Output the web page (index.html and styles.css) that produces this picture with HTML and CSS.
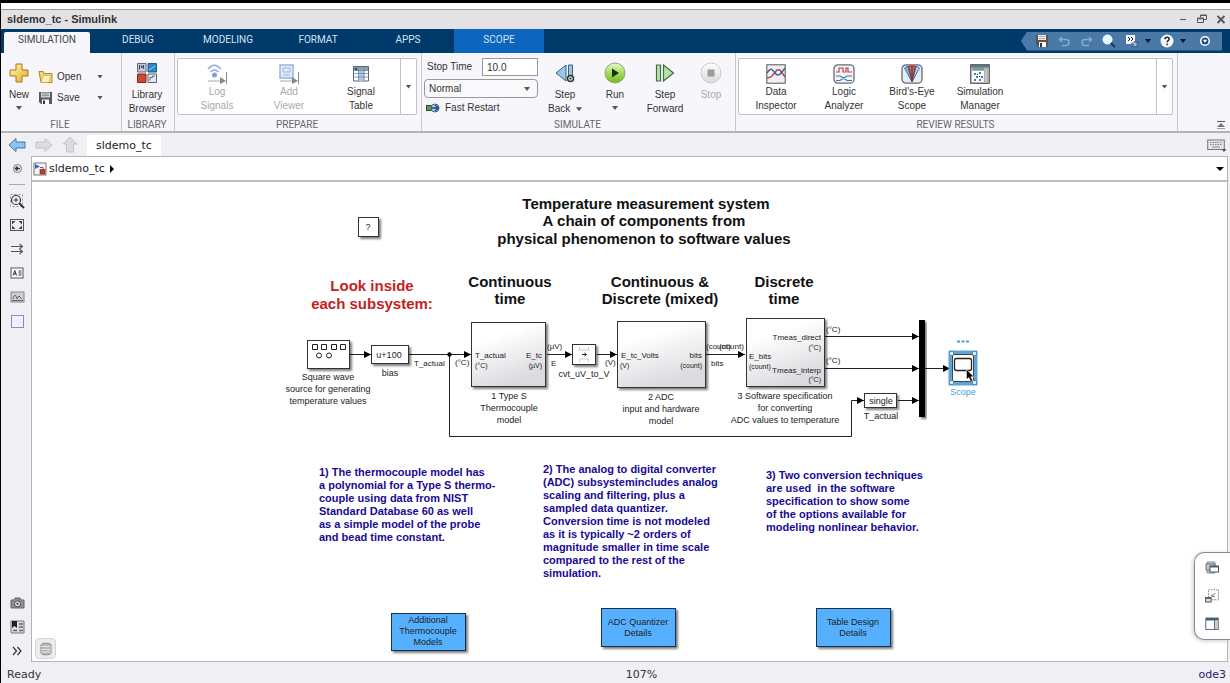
FILE: index.html
```html
<!DOCTYPE html>
<html lang="en">
<head>
<meta charset="utf-8">
<title>sldemo_tc - Simulink</title>
<link rel="stylesheet" href="styles.css">
</head>
<body>
<div class="app">
  <header class="titlebar">
    <h1 class="title">sldemo_tc - Simulink</h1>
    <div class="window-buttons">
      <button class="plain" aria-label="Minimize"><svg width="10" height="10" viewBox="0 0 10 10"><path d="M2 5.5h6" stroke="#666" stroke-width="1.2"/></svg></button>
      <button class="plain" aria-label="Restore"><svg width="10" height="10" viewBox="0 0 10 10" fill="none" stroke="#555"><path d="M3.5 3.500V1h6v4.500H7M3.500 1.500h6M.5 4h6v4.500h-6zM.5 4.800h6"/></svg></button>
      <button class="plain" aria-label="Close"><svg width="10" height="10" viewBox="0 0 10 10"><path d="M1.500 2l7 7M8.500 2l-7 7" stroke="#555" stroke-width="1.800"/></svg></button>
    </div>
  </header>

  <nav class="tabs">
    <button class="tab tab-active">SIMULATION</button>
    <button class="tab">DEBUG</button>
    <button class="tab">MODELING</button>
    <button class="tab">FORMAT</button>
    <button class="tab">APPS</button>
    <button class="tab tab-context">SCOPE</button>
    <div class="quick">
      <button class="plain" aria-label="Save"><svg width="14" height="14" viewBox="0 0 14 14"><path d="M1 1h12v12H3l-2-2z" fill="#555"/><path d="M3 1h8v5H3z" fill="#eee"/><path d="M4 2.500h6M4 4.500h6" stroke="#c98a66" stroke-width=".8"/><path d="M4 8h7v5H4z" fill="#fff"/><path d="M5 9h2v4H5z" fill="#333"/></svg></button>
      <button class="plain" aria-label="Undo"><svg width="13" height="13" viewBox="0 0 13 13" fill="none" stroke="#7faed6" stroke-width="1.500"><path d="M4 2L1.500 4.500 4 7M1.500 4.500H8c4 0 4 6 0 6H4"/></svg></button>
      <button class="plain" aria-label="Redo"><svg width="13" height="13" viewBox="0 0 13 13" fill="none" stroke="#7faed6" stroke-width="1.500"><path d="M9 2l2.500 2.500L9 7M11.500 4.500H5c-4 0-4 6 0 6h4"/></svg></button>
      <button class="plain" aria-label="Search"><svg width="14" height="14" viewBox="0 0 14 14"><path d="M8.500 8.500L13 13" stroke="#173d68" stroke-width="2.200"/><circle cx="5.500" cy="5.500" r="4.500" fill="#e6f6ff" stroke="#fff"/></svg></button>
      <button class="plain" aria-label="Favorites"><svg width="14" height="14" viewBox="0 0 14 14"><path d="M1 1h9v9H1z" fill="#f4f6fa"/><path d="M3 3l2 2-2 2M6 3l2 2-2 2" fill="none" stroke="#222"/><path d="M10 7l1 2 2.500.2-2 1.600.8 2.500L10 12l-2.300 1.300.8-2.500-2-1.600L9 9z" fill="#a9c4de" stroke="#27507c" stroke-width=".7"/></svg><span class="caret caret-black"></span></button>
      <button class="plain quick-help" aria-label="Help"><svg width="14" height="14" viewBox="0 0 14 14"><circle cx="7" cy="7" r="6.500" fill="#f6f8fc"/><path d="M5 5.300c0-2.800 4.200-2.600 4.200-.2C9.200 6.600 7.100 6.600 7.100 8.300M7.100 9.600v1.700" fill="none" stroke="#223" stroke-width="1.500"/></svg><span class="caret caret-black"></span></button>
      <button class="plain" aria-label="More"><svg width="12" height="12" viewBox="0 0 12 12"><circle cx="6" cy="6" r="4.300" fill="#1d4f86" stroke="#fff" stroke-width="1.600"/><path d="M3.800 4.800h4.400L6 7.800z" fill="#fff"/></svg></button>
    </div>
  </nav>

  <div class="ribbon">
    <section class="group group-file">
      <div class="group-body">
        <button class="big big-new">
          <svg width="20" height="20" viewBox="0 0 20 20"><defs><linearGradient id="gold" x2="1" y2="1"><stop offset="0" stop-color="#fff7b8"/><stop offset="1" stop-color="#e9ac20"/></linearGradient></defs><path d="M7 1h6v6h6v6h-6v6H7v-6H1V7h6z" fill="url(#gold)" stroke="#a9771b"/></svg>
          <span>New</span><span class="caret"></span>
        </button>
        <div class="stack">
          <button class="small"><svg width="15" height="14" viewBox="0 0 15 14"><path d="M1 1.500h4l1 2h8v9H3z" fill="#f5d873" stroke="#a98630"/><path d="M5 5.500h8l-2 7H3z" fill="#fff3b2" stroke="#c29c3d" stroke-width=".6"/></svg><span>Open</span><i class="caret"></i></button>
          <button class="small"><svg width="15" height="14" viewBox="0 0 15 14"><path d="M1 1h13v12H3l-2-2z" fill="#555b61"/><path d="M3 1.500h9v5H3z" fill="#d7dbe0"/><path d="M4 3h7M4 4.700h7" stroke="#888"/><path d="M4 8.500h7V13H4z" fill="#fff"/><path d="M5 9.500h2V13H5z" fill="#333"/></svg><span>Save</span><i class="caret"></i></button>
        </div>
      </div>
      <h2 class="group-name">FILE</h2>
    </section>

    <section class="group group-library">
      <div class="group-body">
        <button class="big">
          <svg width="20" height="20" viewBox="0 0 20 20"><path d="M.5.500h8.500v8.500H.5z" fill="#c3cbd6" stroke="#5e6b7c"/><path d="M2.500 2v4.500M4.500 5V2.500l2 3V2" fill="none" stroke="#445"/><path d="M11 .5h8.500V9H11z" fill="#2f86c6" stroke="#1d5f97"/><path d="M12 7l6-4" stroke="#9bd0f5"/><path d="M.5 11h8.500v8.500H.5z" fill="#c94a2c" stroke="#8c2713"/><path d="M11 11h8.500v8.500H11z" fill="#e7e8ee" stroke="#5e6372"/><path d="M13 17.500v-3h2.500V13H18" fill="none" stroke="#667"/></svg>
          <span>Library<br>Browser</span>
        </button>
      </div>
      <h2 class="group-name">LIBRARY</h2>
    </section>

    <section class="group group-prepare">
      <div class="gallery">
        <button class="tile" disabled><svg width="20" height="20" viewBox="0 0 20 20" fill="none"><path d="M1 5c5-5 8-5 13 0M3.500 8c3-3 5-3 8 0" stroke="#8fa9dd" stroke-width="1.700"/><circle cx="7.500" cy="11" r="2.500" fill="#7f9fe0"/><path d="M1 17h13" stroke="#aaa"/><path d="M13 13l6 4-6 3z" fill="#888"/><path d="M19.500 8v12" stroke="#888"/></svg><span>Log<br>Signals</span></button>
        <button class="tile" disabled><svg width="20" height="20" viewBox="0 0 20 20" fill="none"><rect x="1" y="1" width="13" height="13" fill="#e3ecfa" stroke="#9db4dc" stroke-width="1.500"/><path d="M4 4h7v4H4zM4 11h7" stroke="#9db4dc"/><path d="M1 17h13" stroke="#aaa"/><path d="M13 13l6 4-6 3z" fill="#888"/><path d="M19.500 8v12" stroke="#888"/></svg><span>Add<br>Viewer</span></button>
        <button class="tile"><svg width="16" height="20" viewBox="0 0 16 20"><path d="M.5 2.500h15v14.500H.5z" fill="#fff" stroke="#566577"/><path d="M1 3h14v3.500H1z" fill="#8fa2b4"/><path d="M5.500 6h6v11h-6z" fill="#a9cbf3"/><path d="M.5 6.500h15M.5 9.500h15M.5 13h15M5.500 3v14M11 3v14" stroke="#71869b" stroke-width=".8"/><circle cx="3" cy="5" r="1.300" fill="#1c4f92"/></svg><span>Signal<br>Table</span></button>
        <button class="gallery-more" aria-label="More prepare tools"><i class="caret"></i></button>
      </div>
      <h2 class="group-name">PREPARE</h2>
    </section>

    <section class="group group-simulate">
      <div class="group-body">
        <div class="settings">
          <div class="field"><label for="stop-time">Stop Time</label><input id="stop-time" type="text" value="10.0"></div>
          <div class="mode"><select aria-label="Simulation mode"><option>Normal</option></select></div>
          <button class="restart"><svg width="15" height="12" viewBox="0 0 15 12"><rect x=".5" y="3.500" width="5" height="5" fill="#5aa046" stroke="#2c4c2a"/><circle cx="9" cy="6" r="4" fill="#a9cdee" stroke="#456b93"/><path d="M5 6h6M9 3l3.500 3L9 9" fill="none" stroke="#1f4a7c" stroke-width="1.400"/></svg><span>Fast Restart</span></button>
        </div>
        <button class="big big-back">
          <svg width="20" height="20" viewBox="0 0 20 20"><path d="M11 2v16L1 10z" fill="#9cc7e9" stroke="#41617f"/><path d="M13.500 2h4v15h-4z" fill="#9cc7e9" stroke="#41617f"/><circle cx="15.500" cy="15.500" r="3" fill="#ddd" stroke="#333" stroke-width="1.500"/><circle cx="15.500" cy="15.500" r="1" fill="#333"/></svg>
          <span>Step<br>Back <i class="caret caret-inline"></i></span>
        </button>
        <button class="big big-run">
          <svg width="22" height="22" viewBox="0 0 22 22"><defs><linearGradient id="green" x2="0" y2="1"><stop offset="0" stop-color="#eaf8cf"/><stop offset=".5" stop-color="#a5dc57"/><stop offset="1" stop-color="#6cbb22"/></linearGradient></defs><circle cx="11" cy="11" r="10" fill="url(#green)" stroke="#8fa77a"/><path d="M8 6.500v9l7-4.500z" fill="#1f2b1c"/></svg>
          <span>Run</span><span class="caret"></span>
        </button>
        <button class="big big-forward">
          <svg width="20" height="20" viewBox="0 0 20 20" stroke="#3c7042" fill="#b8e2a9" stroke-width="1.200"><path d="M1.500 2h4v16h-4zM8.500 2v16L18.500 10z"/></svg>
          <span>Step<br>Forward</span>
        </button>
        <button class="big big-stop" disabled>
          <svg width="22" height="22" viewBox="0 0 22 22"><defs><linearGradient id="silver" x2="0" y2="1"><stop offset="0" stop-color="#fff"/><stop offset="1" stop-color="#d9d9dc"/></linearGradient></defs><circle cx="11" cy="11" r="10" fill="url(#silver)" stroke="#ccc"/><path d="M7.500 7.500h7v7h-7z" fill="#9b9b9f"/></svg>
          <span>Stop</span>
        </button>
      </div>
      <h2 class="group-name">SIMULATE</h2>
    </section>

    <section class="group group-review">
      <div class="gallery">
        <button class="tile"><svg width="20" height="20" viewBox="0 0 20 20" fill="none"><rect x=".8" y=".8" width="18.400" height="18.400" fill="#f0f0f3" stroke="#555"/><path d="M1 14l4-1 6-7 3 0 5 7" stroke="#c53a45" stroke-width="1.400"/><path d="M1 9c4-6 5-4 8 0s5 2 10-5" stroke="#31639e" stroke-width="1.400"/></svg><span>Data<br>Inspector</span></button>
        <button class="tile"><svg width="22" height="20" viewBox="0 0 22 20" fill="none"><rect x="1" y=".8" width="20" height="18.400" rx="4" fill="#f4f4f7" stroke="#666b77" stroke-width="1.300"/><path d="M3 8h3V4h4v4h3V4h2v4h4" stroke="#c6404b" stroke-width="1.200"/><path d="M3 12h4l7 4.500h5M3 16.500h4L14 12h5" stroke="#3776b4" stroke-width="1.200"/></svg><span>Logic<br>Analyzer</span></button>
        <button class="tile"><svg width="22" height="20" viewBox="0 0 22 20"><rect x="1" y=".8" width="20" height="18.400" rx="4" fill="#e9edf3" stroke="#666b77" stroke-width="1.300"/><path d="M3.500 4l3-2L11 18z" fill="#7db9e6" stroke="#3776b4"/><path d="M18.500 4l-3-2L11 18z" fill="#b8d9f1" stroke="#3776b4"/><path d="M7.500 2h7L11 17z" fill="#cf6961" stroke="#8f2c2c"/><path d="M11 2v13" stroke="#642526"/></svg><span>Bird's-Eye<br>Scope</span></button>
        <button class="tile"><svg width="20" height="20" viewBox="0 0 20 20"><path d="M.5.500h19v19H.5z" fill="#aab0b5" stroke="#666"/><path d="M1 1h18v2.500H1z" fill="#5d7586"/><path d="M3 5h11" stroke="#52a06a" stroke-width="1.500"/><path d="M16 5v13" stroke="#ddd"/><path d="M2 7h12v11H2z" fill="#fff"/><path d="M4 9h2v2H4zM9 8h2v2H9zM6 12h2v2H6zM11 12h2v2h-2zM4 15h2v2H4zM9 15h2v2H9z" fill="#3a86b8"/><path d="M7 10h1v1H7zM9 12h1v1H9z" fill="#333"/></svg><span>Simulation<br>Manager</span></button>
        <button class="gallery-more" aria-label="More review tools"><i class="caret"></i></button>
      </div>
      <h2 class="group-name">REVIEW RESULTS</h2>
    </section>
    <button class="plain collapse" aria-label="Collapse toolstrip"><svg width="10" height="10" viewBox="0 0 10 10"><path d="M1 1.500h8" stroke="#666" stroke-width="1.200"/><path d="M5 3l4 4H1z" fill="#777"/><path d="M1 8.500h8" stroke="#999"/></svg></button>
  </div>

  <div class="docbar">
    <button class="plain" aria-label="Back"><svg width="18" height="16" viewBox="0 0 18 16"><path d="M1 8l7-6.500V5h9v6H8v3.500z" fill="#8fc4ee" stroke="#4178a8"/></svg></button>
    <button class="plain" aria-label="Forward"><svg width="18" height="16" viewBox="0 0 18 16"><path d="M17 8l-7-6.500V5H1v6h9v3.500z" fill="#dcdce0" stroke="#c4c4c9"/></svg></button>
    <button class="plain" aria-label="Up"><svg width="16" height="18" viewBox="0 0 16 18"><path d="M8 1l7 7h-3.500v8h-7V8H1z" fill="#dcdce0" stroke="#c4c4c9"/></svg></button>
    <button class="doctab">sldemo_tc</button>
    <button class="plain keyboard" aria-label="Keyboard shortcuts"><svg width="20" height="14" viewBox="0 0 20 14"><rect x=".7" y="2" width="16.600" height="9.500" fill="#e4e4e8" stroke="#777"/><path d="M3 4.500h12M3 6.500h12" stroke="#888" stroke-width="1.200" stroke-dasharray="1.500 1"/><path d="M5 9h8" stroke="#888"/><path d="M14.500 11h5L17 14z" fill="#555"/></svg></button>
  </div>

  <div class="workspace">
    <aside class="palette">
      <button class="plain" aria-label="Hide browser"><svg width="11" height="11" viewBox="0 0 11 11" fill="none" stroke="#333"><circle cx="5.500" cy="5.500" r="4" stroke="#777"/><path d="M8 5.500H3.500M5.500 3.500l-2 2 2 2" stroke-width="1.500"/></svg></button>
      <hr>
      <button class="plain" aria-label="Zoom"><svg width="16" height="16" viewBox="0 0 16 16" fill="none"><rect x="1.500" y="1.500" width="12" height="12" stroke="#999" stroke-dasharray="2 2"/><circle cx="7" cy="7" r="4.500" fill="#f4f4f6" stroke="#333" stroke-width="1.200"/><path d="M10.500 10.500L15 15" stroke="#333" stroke-width="2"/><path d="M4.800 7h4.400M7 4.800v4.400" stroke="#333"/></svg></button>
      <button class="plain" aria-label="Fit to view"><svg width="14" height="14" viewBox="0 0 14 14"><rect x=".5" y="1.500" width="13" height="11" fill="#eee" stroke="#555"/><path d="M2 3h3.500L2 6.500zM12 3H8.500L12 6.500zM2 11h3.500L2 7.500zM12 11H8.500L12 7.500z" fill="#444"/></svg></button>
      <button class="plain" aria-label="Sample time"><svg width="14" height="12" viewBox="0 0 14 12" fill="none" stroke="#555" stroke-width="1.100"><path d="M1 3.500h11M9.500 1L12.500 3.500 9.500 6M1 8.500h11M9.500 6l3 2.500-3 2.500"/></svg></button>
      <button class="plain" aria-label="Annotation"><svg width="14" height="12" viewBox="0 0 14 12" fill="none" stroke="#555"><rect x="1" y="1" width="12" height="10" fill="#fff"/><path d="M3 8.500l1.800-5 1.700 5M3.500 7h2.700M8.500 4h3M8.500 6h3M8.500 8h3" stroke="#333"/></svg></button>
      <button class="plain" aria-label="Image"><svg width="15" height="12" viewBox="0 0 15 12" fill="none"><rect x="1" y="1" width="13" height="10" fill="#ccd0d4" stroke="#888"/><path d="M3 8c1-5 3-5 4 0M7 8l2-3 3 3M2 9.500h11" stroke="#667"/></svg></button>
      <button class="plain" aria-label="Area"><svg width="13" height="13" viewBox="0 0 13 13"><rect x=".5" y=".5" width="12" height="12" fill="#eeefff" stroke="#8c90b0"/></svg></button>
      <button class="plain palette-camera" aria-label="Screenshot"><svg width="15" height="12" viewBox="0 0 15 12"><path d="M1 3h3l1-2h5l1 2h3v8H1z" fill="#8d9094" stroke="#666"/><circle cx="7.500" cy="6.800" r="3" fill="#eee" stroke="#444"/><circle cx="7.500" cy="6.800" r="1.200" fill="#555"/></svg></button>
      <button class="plain" aria-label="Bookmarks"><svg width="15" height="14" viewBox="0 0 15 14"><path d="M1 1h13v12H1z" fill="#ddd" stroke="#777"/><path d="M2 1h5v7L4.500 6 2 8z" fill="#222"/><path d="M9 4h4M9 7h4M3 10.500h4M9 10.500h4" stroke="#666" stroke-width="1.300"/></svg></button>
      <button class="plain" aria-label="Expand palette"><svg width="10" height="10" viewBox="0 0 10 10" fill="none" stroke="#333" stroke-width="1.200"><path d="M1 1l3.500 4L1 9M5.500 1L9 5 5.500 9"/></svg></button>
    </aside>

    <main class="editor">
      <div class="address">
        <svg width="14" height="14" viewBox="0 0 14 14"><rect x="1" y="1" width="12" height="12" fill="#f5f5f7" stroke="#777"/><path d="M2 2l5 2.500L2 7z" fill="#2f74ad"/><path d="M7 5.500h3V8" fill="none" stroke="#666"/><rect x="7" y="7.500" width="5" height="4.500" fill="#c2382c" stroke="#8d2018" stroke-width=".6"/></svg>
        <span>sldemo_tc</span>
        <svg width="6" height="10" viewBox="0 0 6 10"><path d="M1 1l4 4-4 4z"/></svg>
        <button class="plain address-more" aria-label="History"><svg width="10" height="6" viewBox="0 0 10 6"><path d="M1 1h8L5 5z"/></svg></button>
      </div>

      <div class="canvas">
        <svg class="diagram" width="720" height="476" viewBox="270 182 720 476" role="img" aria-label="Temperature measurement model">
          <defs>
            <linearGradient id="face" x1="0" y1="0" x2=".4" y2="1"><stop offset=".3" stop-color="#fff"/><stop offset="1" stop-color="#dcdade"/></linearGradient>
            <filter id="shadow" x="-20%" y="-20%" width="150%" height="150%"><feDropShadow dx="2" dy="2" stdDeviation="1" flood-color="#000" flood-opacity=".5"/></filter>
            <marker id="arrow" markerUnits="userSpaceOnUse" markerWidth="8" markerHeight="8" refX="7" refY="4" orient="auto"><path d="M0 .5L7 4 0 7.500z"/></marker>
          </defs>

          <g class="heading">
            <text x="646" y="209">Temperature measurement system</text>
            <text x="644" y="226">A chain of components from</text>
            <text x="644" y="244">physical phenomenon to software values</text>
            <text x="510" y="287">Continuous<tspan x="510" dy="17">time</tspan></text>
            <text x="660" y="287">Continuous &amp;<tspan x="660" dy="17">Discrete (mixed)</tspan></text>
            <text x="784" y="287">Discrete<tspan x="784" dy="17">time</tspan></text>
            <text class="red" x="372" y="291">Look inside<tspan x="372" dy="18">each subsystem:</tspan></text>
          </g>

          <g class="wire">
            <path marker-end="url(#arrow)" d="M350 354.500H371"/>
            <path marker-end="url(#arrow)" d="M409 354.500H471"/>
            <path marker-end="url(#arrow)" d="M449.500 354.500V436.500H851.500V400.500H864"/>
            <path marker-end="url(#arrow)" d="M547 354.500H572"/>
            <path marker-end="url(#arrow)" d="M597 354.500H617"/>
            <path marker-end="url(#arrow)" d="M706 354.500H745"/>
            <path marker-end="url(#arrow)" d="M825 336.500H919"/>
            <path marker-end="url(#arrow)" d="M825 368.500H919"/>
            <path marker-end="url(#arrow)" d="M898 400.500H919"/>
            <path marker-end="url(#arrow)" d="M925 368.500H950"/>
          </g>
          <circle cx="449.500" cy="354.500" r="2.200"/>

          <g class="block">
            <rect x="358.500" y="217.500" width="20" height="19"/>
            <rect x="307.500" y="340.500" width="42" height="28"/>
            <rect x="371.500" y="345.500" width="37" height="18"/>
            <rect x="471.500" y="322.500" width="74" height="64" fill="url(#face)"/>
            <rect x="572.500" y="344.500" width="23" height="20"/>
            <rect x="617.500" y="321.500" width="88" height="66" fill="url(#face)"/>
            <rect x="746.500" y="318.500" width="78" height="68" fill="url(#face)"/>
            <rect x="864.500" y="393.500" width="32" height="14"/>
          </g>
          <g class="block block-link">
            <rect x="391.500" y="613.500" width="74" height="37"/>
            <rect x="601.500" y="608.500" width="74" height="38"/>
            <rect x="816.500" y="608.500" width="74" height="38"/>
          </g>
          <rect x="919" y="320" width="6" height="97" filter="url(#shadow)"/>

          <g fill="none" stroke="#222"><path d="M312.500 344.500h5v5h-5zM321.500 344.500h5v5h-5zM331.500 344.500h5v5h-5zM340.500 344.500h5v5h-5z"/><circle cx="319" cy="355.500" r="2.500"/><circle cx="329" cy="355.500" r="2.500"/></g>
          <path d="M582 354.500h4M584.500 353l2 1.500-2 1.500" fill="none" stroke="#222"/>
          <path d="M579.500 347v3h9v-3M579.500 362v-3h9v3" fill="none" stroke="#ccc"/>

          <g class="port">
            <text x="475" y="358">T_actual</text><text class="unit" x="475" y="368">(°C)</text>
            <text class="end" x="542" y="358">E_tc</text><text class="unit end" x="542" y="368">(µV)</text>
            <text x="621" y="358">E_tc_Volts</text><text class="unit" x="620" y="368">(V)</text>
            <text class="end" x="702" y="358">bits</text><text class="unit end" x="702" y="368">(count)</text>
            <text x="749" y="359">E_bits</text><text class="unit" x="749" y="369">(count)</text>
            <text class="end" x="821" y="340">Tmeas_direct</text><text class="unit end" x="821" y="350">(°C)</text>
            <text class="end" x="821" y="373">Tmeas_interp</text><text class="unit end" x="821" y="382">(°C)</text>
            <text x="414" y="366">T_actual</text><text x="455" y="365">(°C)</text>
            <text x="547" y="349">(µV)</text><text x="551" y="366">E</text>
            <text x="605" y="365">(V)</text>
            <text x="706" y="349">(count)</text><text x="719" y="349">(count)</text><text x="711" y="366">bits</text>
            <text x="826" y="332">(°C)</text><text x="826" y="363">(°C)</text>
          </g>

          <g class="label">
            <text x="368" y="230">?</text>
            <text x="389" y="358">u+100</text>
            <text x="390" y="376">bias</text>
            <text x="328" y="380">Square wave<tspan x="328" dy="12">source for generating</tspan><tspan x="328" dy="12">temperature values</tspan></text>
            <text x="509" y="399">1 Type S<tspan x="509" dy="12">Thermocouple</tspan><tspan x="509" dy="12">model</tspan></text>
            <text x="584" y="377">cvt_uV_to_V</text>
            <text x="661" y="400">2 ADC<tspan x="661" dy="12">input and hardware</tspan><tspan x="661" dy="12">model</tspan></text>
            <text x="785" y="399">3 Software specification<tspan x="785" dy="12">for converting</tspan><tspan x="785" dy="12">ADC values to temperature</tspan></text>
            <text x="881" y="404">single</text>
            <text x="881" y="419">T_actual</text>
            <text class="scope-name" x="963" y="395">Scope</text>
            <text x="428" y="623">Additional<tspan x="428" dy="11">Thermocouple</tspan><tspan x="428" dy="11">Models</tspan></text>
            <text x="638" y="625">ADC Quantizer<tspan x="638" dy="11">Details</tspan></text>
            <text x="853" y="625">Table Design<tspan x="853" dy="11">Details</tspan></text>
          </g>

          <g class="note">
            <text x="319" y="476">1) The thermocouple model has<tspan x="319" dy="13">a polynomial for a Type S thermo-</tspan><tspan x="319" dy="13">couple using data from NIST</tspan><tspan x="319" dy="13">Standard Database 60 as well</tspan><tspan x="319" dy="13">as a simple model of the probe</tspan><tspan x="319" dy="13">and bead time constant.</tspan></text>
            <text x="543" y="473">2) The analog to digital converter<tspan x="543" dy="13">(ADC) subsystemincludes analog</tspan><tspan x="543" dy="13">scaling and filtering, plus a</tspan><tspan x="543" dy="13">sampled data quantizer.</tspan><tspan x="543" dy="13">Conversion time is not modeled</tspan><tspan x="543" dy="13">as it is typically ~2 orders of</tspan><tspan x="543" dy="13">magnitude smaller in time scale</tspan><tspan x="543" dy="13">compared to the rest of the</tspan><tspan x="543" dy="13">simulation.</tspan></text>
            <text x="766" y="479">3) Two conversion techniques<tspan x="766" dy="13">are used&#160; in the software</tspan><tspan x="766" dy="13">specification to show some</tspan><tspan x="766" dy="13">of the options available for</tspan><tspan x="766" dy="13">modeling nonlinear behavior.</tspan></text>
          </g>

          <g>
            <path d="M957 341.500h12" stroke="#3fa3dc" stroke-width="2" stroke-dasharray="3 1.500"/>
            <rect x="950.500" y="352.500" width="25" height="31" fill="#fff" stroke="#5aa5da" stroke-width="4"/>
            <rect x="952.500" y="354.500" width="21" height="27" fill="#fff" stroke="#444"/>
            <rect x="954.500" y="358.500" width="17" height="12" rx="2" fill="#fff" stroke="#222" stroke-width="1.300"/>
            <path d="M949.500 351.500h4v4h-4zM972.500 351.500h4v4h-4zM949.500 380.500h4v4h-4zM972.500 380.500h4v4h-4z" fill="#d7ebf8" stroke="#4c7d9f" stroke-width=".8"/>
            <path d="M966.500 369.500v10l2.400-2 1.800 4 2-1-1.900-3.700h3.200z" stroke="#fff" stroke-width=".5"/>
          </g>
        </svg>

        <button class="plain model-data" aria-label="Model data"><svg width="14" height="14" viewBox="0 0 14 14"><path d="M2 3c0-2.500 10-2.500 10 0v8c0 2.500-10 2.500-10 0z" fill="#b9b9bc" stroke="#8a8a8d"/><path d="M2 4.500h10M2 7.500h10M2 10h10" stroke="#e0e0e3"/></svg></button>
        <div class="dock">
          <button class="plain" aria-label="Windows"><svg width="14" height="14" viewBox="0 0 14 14"><path d="M2 1h8v11H2z" fill="#c5cbd2" stroke="#8a929a"/><path d="M1 3h9v6H1z" fill="#c5cbd2" stroke="#68727d"/><rect x="5" y="5" width="8.500" height="6" fill="#fff" stroke="#45586b"/><path d="M5 5.700h8.500" stroke="#45586b" stroke-width="1.500"/></svg></button>
          <button class="plain" aria-label="Restore size"><svg width="14" height="14" viewBox="0 0 14 14" fill="none"><rect x="3.500" y=".8" width="10" height="10" stroke="#888" stroke-dasharray="1.500 1"/><path d="M7 7.500l3.500-3.500M7 5v2.500h2.500" stroke="#678"/><rect x=".6" y="8.500" width="5.500" height="4.500" fill="#ddd" stroke="#555"/><path d="M.6 9.300h5.500" stroke="#555"/></svg></button>
          <button class="plain" aria-label="Property inspector"><svg width="14" height="14" viewBox="0 0 14 14"><rect x=".8" y="1" width="12.500" height="11.500" fill="#fff" stroke="#62707e"/><path d="M1 2.300h12" stroke="#3d566f" stroke-width="2.300"/><path d="M9.500 3.500h3.500V12H9.500z" fill="#c3ccd6"/><path d="M9.500 3v9.500" stroke="#62707e"/></svg></button>
        </div>
      </div>
    </main>
  </div>

  <footer class="status"><span>Ready</span><span class="zoom-level">107%</span><a class="solver" href="#solver">ode3</a></footer>
</div>
</body>
</html>
```
FILE: styles.css
```css
* { box-sizing: border-box; }
html, body { height: 100%; margin: 0; }
body { background: #000; }
button, input, select { font: inherit; color: inherit; margin: 0; }
button { background: none; border: 0; padding: 0; }
svg { display: block; flex: none; }
h1, h2 { margin: 0; }

.app {
  height: 100vh;
  display: flex;
  flex-direction: column;
  border-top: 3px solid #000;
  border-left: 1px solid #000;
  background: #f0eff3;
  color: #333;
  font: 10px/14px "Liberation Sans", Arial, sans-serif;
}
.plain { display: flex; align-items: center; justify-content: center; gap: 6px; }
.caret {
  display: block;
  width: 6px;
  height: 4px;
  background: #555;
  clip-path: polygon(0 0, 100% 0, 50% 100%);
}
.caret-black { background: #0a1420; }
.caret-inline { display: inline-block; margin-left: 3px; vertical-align: middle; }

.titlebar {
  display: flex;
  align-items: center;
  height: 26px;
  padding: 0 4px 0 6px;
  border-top: 6px solid #fff;
  background: #e4e2e5;
  box-shadow: inset 0 1px #999;
}
.title { font-size: 11px; font-weight: bold; line-height: 16px; color: #333; }
.window-buttons { display: flex; gap: 9px; margin-left: auto; }

.tabs {
  display: flex;
  align-items: flex-end;
  height: 24px;
  padding-left: 3px;
  background: #003a6b;
  font-family: Roboto, "Liberation Sans", sans-serif;
}
.tab { width: 90px; height: 24px; padding-bottom: 3px; color: #d4e3f1; }
.tab-active { width: 86px; height: 21px; margin-right: 3px; padding-bottom: 6px; background: #f7f6fa; color: #3c4650; border-radius: 2px 2px 0 0; }
.tab-context { background: #0d66bd; margin-left: 1px; }
.quick {
  display: flex;
  align-items: center;
  align-self: center;
  gap: 9px;
  width: 201px;
  height: 19px;
  margin: 0 8px 0 auto;
  padding-left: 14px;
  background: #4a79a8;
  clip-path: polygon(6px 0, 100% 0, 100% 100%, 6px 100%, 0 50%);
}
.quick-help { margin-right: 4px; }

.ribbon { display: flex; height: 80px; background: #f7f6fa; border-bottom: 2px solid #b3b2b6; }
.group { display: flex; flex-direction: column; padding: 5px 4px 0 2px; border-right: 1px solid #c9c8cc; flex: none; }
.group-body { display: flex; height: 62px; }
.group-name { padding-top: 1px; font: 10px/12px Roboto, "Liberation Sans", sans-serif; text-align: center; color: #67676b; }
.group-file { width: 121px; }
.group-library { width: 53px; }
.group-prepare { width: 247px; }
.group-simulate { width: 314px; }
.group-review { width: 442px; }
.group-library .group-body { justify-content: center; }

.big { display: flex; flex-direction: column; align-items: center; padding-top: 4px; gap: 4px; line-height: 14px; }
.big svg { height: 22px; }
.big-new { width: 32px; }
.big-back { width: 54px; }
.big-run { width: 46px; }
.big-forward { width: 54px; }
.big-stop { width: 38px; }
button:disabled { color: #a9a9ad; }
.stack { display: flex; flex-direction: column; gap: 6px; padding: 11px 0 0 3px; }
.small { display: flex; align-items: center; gap: 4px; height: 15px; }
.small span { width: 36px; text-align: left; }

.gallery { display: flex; height: 59px; margin-bottom: 3px; padding-left: 3px; background: #fff; border: 1px solid #c2c1c5; border-radius: 2px; }
.tile { display: flex; flex-direction: column; align-items: center; gap: 1px; flex: none; width: 72px; padding-top: 5px; }
.group-review .tile { width: 68px; }
.gallery-more { display: flex; align-items: center; justify-content: center; width: 16px; margin-left: auto; border-left: 1px solid #c2c1c5; }

.settings { display: flex; flex-direction: column; width: 114px; gap: 3px; }
.field { display: flex; align-items: center; justify-content: space-between; padding-left: 3px; }
.field input { width: 56px; height: 18px; padding: 0 4px; border: 1px solid #99989d; background: #fff; }
.mode { position: relative; }
.mode select { display: block; width: 100%; height: 19px; padding: 0 4px; appearance: none; border: 1px solid #99989d; border-radius: 4px; background: #f9f9fb; }
.mode::after { content: ""; position: absolute; right: 8px; top: 8px; width: 6px; height: 4px; background: #555; clip-path: polygon(0 0, 100% 0, 50% 100%); }
.restart { display: flex; align-items: center; gap: 4px; padding-left: 2px; }
.collapse { margin: auto 4px 1px auto; }

.docbar { display: flex; align-items: center; gap: 9px; height: 23px; padding: 0 3px 0 7px; }
.doctab { align-self: flex-end; height: 21px; padding: 0 9px; background: #fff; font: 11px/20px "DejaVu Sans", sans-serif; color: #222; }
.keyboard { margin-left: auto; }

.workspace { display: flex; flex: 1; min-height: 0; }
.palette { display: flex; flex-direction: column; align-items: center; gap: 10px; width: 30px; padding: 5px 0 4px 2px; }
.palette .plain { height: 14px; }
.palette hr { width: 16px; margin: -1px 0; border: 0; border-top: 1px solid #aaa; }
.palette .palette-camera { margin-top: auto; }

.editor { display: flex; flex-direction: column; flex: 1; min-width: 0; margin-right: 2px; border: 1px solid #b4b4b8; background: #fff; }
.address { display: flex; align-items: center; gap: 2px; height: 25px; padding: 0 2px 0 1px; border-bottom: 2px solid #bdbcc0; font: 11px/16px "DejaVu Sans", sans-serif; color: #222; }
.address span { margin-right: 2px; }
.address-more { margin-left: auto; }

.canvas { position: relative; display: flex; justify-content: center; flex: 1; min-height: 0; background: #fff; }
.diagram { font-family: "Liberation Sans", Arial, sans-serif; }
.heading text { font-size: 15px; font-weight: bold; text-anchor: middle; fill: #111; }
.heading .red { fill: #c5221f; }
.wire path { fill: none; stroke: #222; }
.block rect { stroke: #333; filter: url(#shadow); }
.block rect:not([fill]) { fill: #fff; }
.block-link rect:not([fill]) { fill: #55b0ff; stroke: #15324e; }
.port text { font-size: 8px; fill: #222; }
.port .unit { font-size: 7px; }
.port .end { text-anchor: end; }
.label text { font-size: 9px; text-anchor: middle; fill: #222; }
.label .scope-name { fill: #45a0d8; }
.note text { font-size: 11px; font-weight: bold; fill: #170a96; }

.model-data { position: absolute; left: 3px; bottom: 2px; width: 21px; height: 21px; background: #ececee; border: 1px solid #d4d4d7; border-radius: 4px; }
.dock { position: absolute; right: -3px; bottom: 21px; display: flex; flex-direction: column; justify-content: space-between; width: 36px; padding: 8px 2px 8px 0; height: 88px; background: #fff; border: 1px solid #88888c; border-right: 0; border-radius: 10px 0 0 10px; box-shadow: -1px 1px 4px #ccc; }

.status { display: grid; grid-template-columns: 1fr auto 1fr; align-items: center; height: 21px; padding: 4px 4px 0 6px; font: 11px/16px "DejaVu Sans", sans-serif; }
.zoom-level { padding-left: 50px; }
.solver { justify-self: end; color: #26216e; text-decoration: none; }
```
